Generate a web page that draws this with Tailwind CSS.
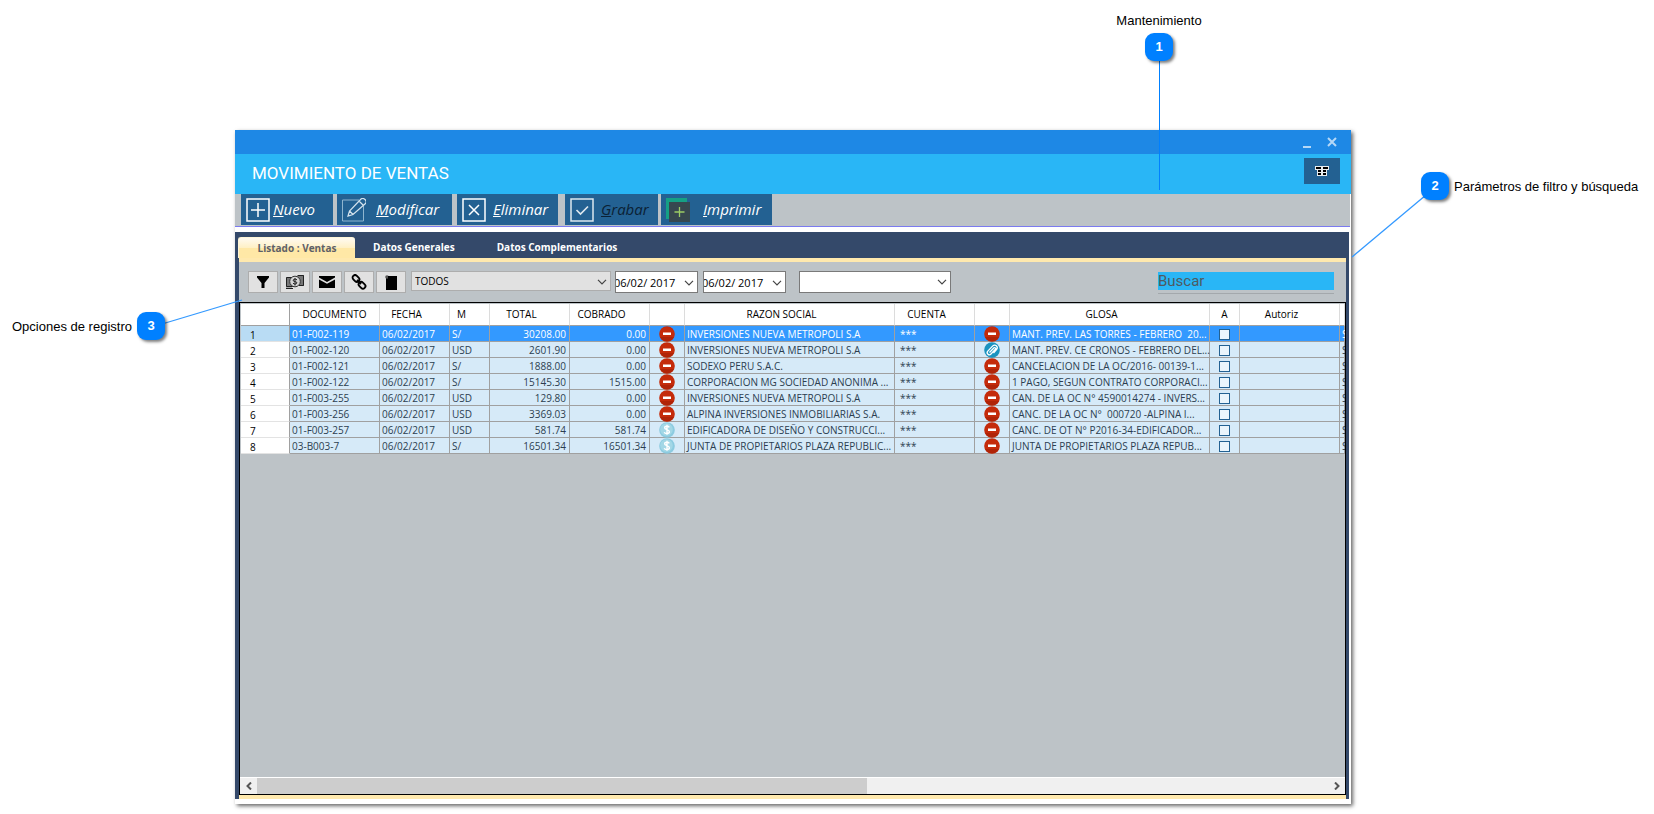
<!DOCTYPE html>
<html lang="es">
<head>
<meta charset="utf-8">
<title>Movimiento de ventas</title>
<script src="https://cdn.jsdelivr.net/npm/@tailwindcss/browser@4"></script>
</head>
<body class="bg-white font-['Open_Sans',sans-serif] text-black">

<svg class="hidden">
  <symbol id="chev" viewBox="0 0 10 6"><path d="M1 .8 5 4.8 9 .8" fill="none" stroke="#444" stroke-width="1.2"/></symbol>
  <symbol id="minus" viewBox="0 0 16 16"><circle cx="8" cy="8" r="7.8" fill="#c42b0b"/><path d="M1 11A7.8 7.8 0 0 0 15 11Z" fill="#b02408"/><rect x="4" y="6.5" width="8" height="2.5" fill="#fff"/></symbol>
  <symbol id="money" viewBox="0 0 16 16"><circle cx="8" cy="8" r="7.8" fill="#8ccbe0"/><circle cx="7.5" cy="7.5" r="6.3" fill="#a3d7e6"/><path d="M10.3 5.3C9.5 3.9 5.6 3.8 5.6 5.8c0 2.300 4.800 1.500 4.800 4 0 2.200-4.400 2.200-5.200.4M8 2.800v10" fill="none" stroke="#fff" stroke-width="1.400"/></symbol>
  <symbol id="clip" viewBox="0 0 16 16"><circle cx="8" cy="8" r="7.8" fill="#1a93c0"/><path d="M5.500 10.500 10 5.800a1 1 0 0 1 1.400 1.400L7 12a2.100 2.100 0 0 1-3.200-2.900L8.800 3.900a2.600 2.600 0 0 1 3.900 3.400L9.500 11" fill="none" stroke="#fff" stroke-width="1.300"/></symbol>
</svg>

<main class="relative flex min-h-screen pt-[130px]">
  <div class="w-[235px] shrink-0"></div>

  <section class="mb-[10px] flex min-w-0 flex-1 flex-col bg-white shadow-[2px_2px_4px_rgba(0,0,0,0.6)]">
    <div class="flex h-6 items-center justify-end gap-4 bg-[#1e88e5] pr-[14px]">
      <button aria-label="Minimizar" class="flex h-4 w-2 items-end pb-[2px]"><span class="h-[2px] w-2 bg-[#b5d8f7]"></span></button>
      <button aria-label="Cerrar"><svg class="size-[10px]" viewBox="0 0 10 10"><path d="M1 1 9 9M9 1 1 9" stroke="#b5d8f7" stroke-width="2"/></svg></button>
    </div>
    <header class="flex h-10 items-center justify-between bg-[#29b6f6] pr-[11px] pl-[17px]">
      <h1 class="font-[Roboto,sans-serif] text-[17px] font-normal text-white">MOVIMIENTO DE VENTAS</h1>
      <button aria-label="Columnas" class="mb-[6px] flex h-[26px] w-9 items-center justify-center bg-[#236192]">
        <svg class="h-[10px] w-[14px]" viewBox="0 0 14 10"><path d="M0 0h14v4h-2v6H2V4H0z" fill="#e9eef0"/><path d="M1 1h5v2H1zM8 1h5v2H8zM3 4h3v2H3zM8 4h3v2H8zM3 7h3v2H3zM8 7h3v2H8z" fill="#000"/></svg>
      </button>
    </header>

    <div class="mr-px flex h-[31px] bg-[#bdc3c7] pl-[6px] text-[15px] font-medium text-white italic">
      <button class="mr-1 flex w-[92px] items-center gap-[3px] bg-[#236192] pl-[5px]">
        <svg class="size-6" viewBox="0 0 24 24" fill="none" stroke="#fff"><rect x="1" y="1" width="22" height="22" stroke-width="1.500"/><path d="M12 5v14M5 12h14" stroke-width="1.500"/></svg>
        <span><u>N</u>uevo</span>
      </button>
      <button class="mr-[5px] flex w-[115px] items-center gap-[10px] bg-[#236192] pl-[5px]">
        <svg class="size-6" viewBox="0 0 24 24" fill="none" stroke="#d5e3ed"><path d="M17 2H.5v21h21V8" stroke="#8fb5cf"/><path d="m6 18 1.500-5L19 1q2-1.500 4 .5t.5 4L11 16.500zM17 3l4 4M7.500 13l3.500 3.500" stroke-width="1.200"/></svg>
        <span><u>M</u>odificar</span>
      </button>
      <button class="mr-[7px] flex w-[101px] items-center gap-[7px] bg-[#236192] pl-[5px]">
        <svg class="size-6" viewBox="0 0 24 24" fill="none" stroke="#fff"><rect x="1" y="1" width="22" height="22" stroke-width="1.500"/><path d="m7 7 10 10M17 7 7 17" stroke-width="1.500"/></svg>
        <span><u>E</u>liminar</span>
      </button>
      <button class="mr-[3px] flex w-[93px] items-center gap-[7px] bg-[#236192] pl-[5px] text-[#0b2135]">
        <svg class="size-6" viewBox="0 0 24 24" fill="none" stroke="#dde7ee"><rect x="1" y="1" width="22" height="22" stroke-width="1.500"/><path d="m6.500 12 4 4L18 8.500" stroke-width="1.700"/></svg>
        <span><u>G</u>rabar</span>
      </button>
      <button class="flex w-[111px] items-center gap-[13px] bg-[#236192] pl-[5px]">
        <svg class="size-6" viewBox="0 0 24 24"><path d="M0 0h21v5H4v16H0z" fill="#16a085"/><path d="M3 4h21v20H3z" fill="#37474f"/><path d="M13.500 9v10M8.500 14h10" stroke="#9ccc65" stroke-width="1.300"/></svg>
        <span><u>I</u>mprimir</span>
      </button>
    </div>
    <div class="mr-px mb-[5px] h-[2px] border-b border-[#7b7bf0] bg-[#bdc3c7]"></div>

    <div class="mr-[2px] mb-[5px] flex flex-1 flex-col bg-[#34496a] pr-[3px]">
      <nav class="flex h-[26px] items-end pl-[3px] text-[10px] font-bold text-white">
        <button class="h-[21px] w-[117px] rounded-t-[3px] border-t border-l border-[#fff6d8] bg-linear-to-b from-[#fffaf0] from-0% via-[#fff0c4] via-50% to-[#ffe8a6] to-50% text-[#5e6066]">Listado : Ventas</button>
        <button class="h-[21px] px-[18px]">Datos Generales</button>
        <button class="h-[21px] px-6">Datos Complementarios</button>
      </nav>
      <div class="ml-1 flex flex-1 flex-col border-y-4 border-[#ffe9ae] bg-[#bdc3c7]">
        <form class="flex h-10 items-start pt-[9px] pr-[12px] pl-[9px]">
          <div class="flex gap-[2px]">
            <button type="button" aria-label="Filtrar" class="flex h-[22px] w-[30px] items-center justify-center border border-[#adadad] bg-[#e1e1e1]"><svg class="size-3" viewBox="0 0 12 12"><path d="M0 0h12v1.500L7.500 7v5h-3V7L0 1.500z"/></svg></button>
            <button type="button" aria-label="Cobrar" class="flex h-[22px] w-[30px] items-center justify-center border border-[#adadad] bg-[#e1e1e1]"><svg class="h-4 w-[18px]" viewBox="0 0 18 16" fill="none"><path d="M0 3.500h6v10H0zM11 1h7v11h-5z" fill="#777"/><path d="M6 3.500H.5v9H7M12 1.500h5.500v10H13M0 14.500h7" stroke="#222"/><circle cx="9" cy="7.500" r="5.300" fill="#d5d5d5" stroke="#333"/><path d="M11 5.800Q9 4.300 7.500 5.600T9 7.600t1.500 2T7 9.300M9 4v7.500" stroke="#222"/></svg></button>
            <button type="button" aria-label="Correo" class="flex h-[22px] w-[30px] items-center justify-center border border-[#adadad] bg-[#e1e1e1]"><svg class="h-3 w-4" viewBox="0 0 16 12"><path d="M0 0h16v1.500L8 6 0 1.500zM0 3.500 8 7.800l8-4.300V12H0z"/></svg></button>
            <button type="button" aria-label="Enlazar" class="flex h-[22px] w-[30px] items-center justify-center border border-[#adadad] bg-[#e1e1e1]"><svg class="size-4" viewBox="0 0 16 16" fill="none" stroke="#000" stroke-width="1.900"><rect x="1.200" y="2" width="7.500" height="5" rx="2.500" transform="rotate(45 5 4.500)"/><rect x="7.300" y="8.700" width="7.500" height="5" rx="2.500" transform="rotate(45 11 11.200)"/><path d="m6 6 4 4"/></svg></button>
            <button type="button" aria-label="Registro" class="flex h-[22px] w-[30px] items-center justify-center border border-[#adadad] bg-[#e1e1e1]"><svg class="h-[15px] w-3" viewBox="0 0 12 15"><path d="M1 3h11v12H1z"/><circle cx="2" cy="2" r="1.800" fill="#555"/><path d="M3 1h9v3H3z"/></svg></button>
          </div>
          <div class="relative ml-[5px] h-5 w-[200px]">
            <select aria-label="Tipo" class="block size-full appearance-none border border-[#adadad] bg-[#e1e1e1] pl-[3px] text-[10px] leading-4"><option>TODOS</option></select>
            <svg class="pointer-events-none absolute top-[8px] right-1 h-[6px] w-[10px]"><use href="#chev"/></svg>
          </div>
          <div class="relative ml-1 h-[22px] w-[83px]">
            <input aria-label="Desde" value="06/02/ 2017" class="block size-full border border-[#7a7a7a] bg-white pr-5 indent-[-2px] text-[11px]">
            <svg class="pointer-events-none absolute top-[9px] right-1 h-[6px] w-[10px]"><use href="#chev"/></svg>
          </div>
          <div class="relative ml-[5px] h-[22px] w-[83px]">
            <input aria-label="Hasta" value="06/02/ 2017" class="block size-full border border-[#7a7a7a] bg-white pr-5 indent-[-2px] text-[11px]">
            <svg class="pointer-events-none absolute top-[9px] right-1 h-[6px] w-[10px]"><use href="#chev"/></svg>
          </div>
          <div class="relative ml-[13px] h-[22px] w-[152px]">
            <select aria-label="Estado" class="block size-full appearance-none border border-[#7a7a7a] bg-white text-[11px]"><option></option></select>
            <svg class="pointer-events-none absolute top-2 right-1 h-[6px] w-[10px]"><use href="#chev"/></svg>
          </div>
          <div class="mt-px ml-auto w-44 border-b border-[#a3a8ac] pb-[3px]">
            <input aria-label="Buscar" placeholder="Buscar" class="block h-[18px] w-full bg-[#29b6f6] pt-px font-[Roboto,sans-serif] text-[15px] placeholder:text-[#4e5a61]">
          </div>
        </form>

        <div class="flex flex-1 flex-col overflow-hidden border border-black">
          <div class="flex-1 pt-px pl-px">
          <table class="w-full table-fixed border-separate border-spacing-0 text-[10px] leading-[13px] text-[#2c3e50]">
            <colgroup><col class="w-[49px]"><col class="w-[90px]"><col class="w-[70px]"><col class="w-10"><col class="w-20"><col class="w-20"><col class="w-[35px]"><col class="w-[210px]"><col class="w-20"><col class="w-[35px]"><col class="w-[200px]"><col class="w-[30px]"><col class="w-[100px]"><col></colgroup>
            <thead>
              <tr class="h-[22px] bg-white text-black [&>th]:border-r [&>th]:border-b [&>th]:border-r-[#dcdcdc] [&>th]:border-b-[#a0a0a0] [&>th]:p-0 [&>th]:pr-4 [&>th]:font-medium">
                <th class="border-r-[#a0a0a0]!"></th><th class="pr-0!">DOCUMENTO</th><th>FECHA</th><th>M</th><th>TOTAL</th><th>COBRADO</th><th></th><th>RAZON SOCIAL</th><th>CUENTA</th><th></th><th>GLOSA</th><th class="pr-0!">A</th><th>Autoriz</th><th></th>
              </tr>
            </thead>
            <tbody id="rows"></tbody>
          </table>
          </div>
          <div class="flex h-[17px] border-t border-white bg-[#f0f0f0]">
            <button aria-label="Izquierda" class="flex w-[17px] items-center justify-center"><svg class="h-2 w-[6px]" viewBox="0 0 6 8"><path d="M5 .5 1.500 4 5 7.500" fill="none" stroke="#555" stroke-width="2"/></svg></button>
            <div class="flex-1"><div class="h-full w-[57%] bg-[#cdcdcd]"></div></div>
            <button aria-label="Derecha" class="flex w-[17px] items-center justify-center"><svg class="h-2 w-[6px]" viewBox="0 0 6 8"><path d="M1 .5 4.500 4 1 7.500" fill="none" stroke="#555" stroke-width="2"/></svg></button>
          </div>
        </div>
      </div>
    </div>
  </section>

  <div class="w-[303px] shrink-0"></div>

  <!-- Numbered callouts laid over the window -->
  <div class="font-['Liberation_Sans',sans-serif] text-[13px] leading-4">
    <svg class="absolute top-[60px] right-[494px] h-[130px] w-px"><path d="M.5 0v130" stroke="#0080ff"/></svg>
    <div class="absolute top-[13px] right-[451px] flex w-[88px] flex-col items-center gap-1">
      <span>Mantenimiento</span>
      <span class="flex size-7 items-center justify-center rounded-[9px] bg-[#0080ff] font-bold text-white shadow-[2px_2px_3px_rgba(0,0,0,0.5)]">1</span>
    </div>
    <svg class="absolute top-[190px] right-[224px] h-[70px] w-20"><path d="M2 67 76 5" stroke="#3399ff" stroke-width="1.300"/></svg>
    <div class="absolute top-[172px] right-[14px] flex w-[219px] items-center gap-[5px]">
      <span class="flex size-7 shrink-0 items-center justify-center rounded-[9px] bg-[#0080ff] font-bold text-white shadow-[2px_2px_3px_rgba(0,0,0,0.5)]">2</span>
      <span class="pt-[2px] whitespace-nowrap">Parámetros de filtro y búsqueda</span>
    </div>
    <svg class="absolute top-[298px] left-[160px] h-[30px] w-[84px]"><path d="M2 26 82 2" stroke="#3399ff" stroke-width="1.300"/></svg>
    <div class="absolute top-[312px] left-3 flex w-[153px] items-center justify-between">
      <span class="pt-[2px] whitespace-nowrap">Opciones de registro</span>
      <span class="flex size-7 shrink-0 items-center justify-center rounded-[9px] bg-[#0080ff] font-bold text-white shadow-[2px_2px_3px_rgba(0,0,0,0.5)]">3</span>
    </div>
  </div>
</main>

<script>
const data = [
  ["01-F002-119","S/","30208.00","0.00","minus","INVERSIONES NUEVA METROPOLI S.A","minus","MANT. PREV. LAS TORRES - FEBRERO\u00a0 20..."],
  ["01-F002-120","USD","2601.90","0.00","minus","INVERSIONES NUEVA METROPOLI S.A","clip","MANT. PREV. CE CRONOS - FEBRERO DEL..."],
  ["01-F002-121","S/","1888.00","0.00","minus","SODEXO PERU S.A.C.","minus","CANCELACION DE LA OC/2016- 00139-1..."],
  ["01-F002-122","S/","15145.30","1515.00","minus","CORPORACION MG SOCIEDAD ANONIMA ...","minus","1 PAGO, SEGUN CONTRATO CORPORACI..."],
  ["01-F003-255","USD","129.80","0.00","minus","INVERSIONES NUEVA METROPOLI S.A","minus","CAN. DE LA OC N° 4590014274 - INVERS..."],
  ["01-F003-256","USD","3369.03","0.00","minus","ALPINA INVERSIONES INMOBILIARIAS S.A.","minus","CANC. DE LA OC N°\u00a0 000720 -ALPINA I..."],
  ["01-F003-257","USD","581.74","581.74","money","EDIFICADORA DE DISEÑO Y CONSTRUCCI...","minus","CANC. DE OT N° P2016-34-EDIFICADOR..."],
  ["03-B003-7","S/","16501.34","16501.34","money","JUNTA DE PROPIETARIOS PLAZA REPUBLIC...","minus","JUNTA DE PROPIETARIOS PLAZA REPUB..."]
];
const icon = n => `<svg class="mx-auto -mb-px block size-4"><use href="#${n}"/></svg>`;
document.getElementById("rows").innerHTML = data.map((r, i) => `
<tr class="h-4 ${i ? "bg-[#d6eaf8]" : "bg-[#3399ff] text-white"} [&>td]:border-r [&>td]:border-b [&>td]:border-[#a0a0a0] [&>td]:p-0 [&>td]:px-[2px] [&>td]:pt-[2px] [&>td]:whitespace-nowrap">
<th class="border-r border-b border-r-[#a0a0a0] border-b-[#e3e3e3] ${i ? "bg-white" : "bg-[#b9dcf4]"} p-0 pt-1 pl-[9px] text-left leading-[11px] font-medium text-black">${i + 1}</th>
<td>${r[0]}</td><td>06/02/2017</td><td>${r[1]}</td><td class="pr-[3px]! text-right">${r[2]}</td><td class="pr-[3px]! text-right">${r[3]}</td>
<td class="pt-0!">${icon(r[4])}</td><td>${r[5]}</td><td class="pl-[5px]!">***</td><td class="pt-0!">${icon(r[6])}</td><td>${r[7]}</td>
<td><input type="checkbox" aria-label="Autorizar ${r[0]}" class="mx-auto block size-[11px] appearance-none border border-[#236192] bg-[#eaf5fc]"></td><td></td><td>S</td></tr>`).join("");
</script>
</body>
</html>
